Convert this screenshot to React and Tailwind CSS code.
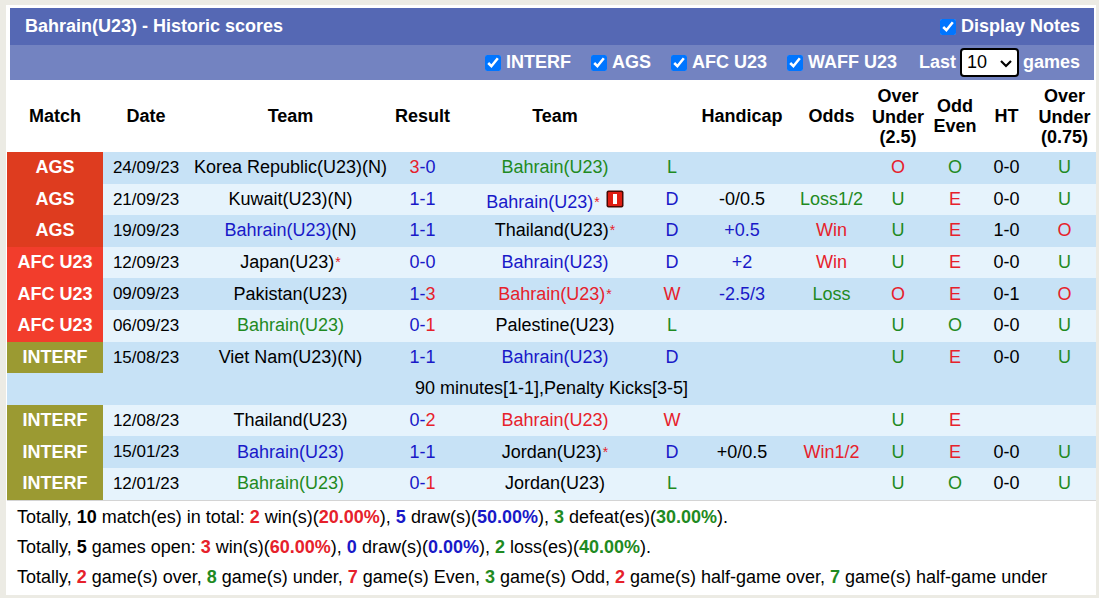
import React from "react";

const C = {
  k: "text-black",
  b: "text-[#1919c8]",
  g: "text-[#1f8a22]",
  r: "text-[#e6212b]",
};

const matchBg = {
  AGS: "bg-[#de3c1f]",
  "AFC U23": "bg-[#f23d2c]",
  INTERF: "bg-[#9b9a32]",
};

const rows = [
  { m: "AGS", date: "24/09/23", home: ["Korea Republic(U23)(N)", "k"], s: ["3", "r", "0", "b"], away: ["Bahrain(U23)", "g"], res: ["L", "g"], hc: ["", "k"], odds: ["", "k"], ou: ["O", "r"], oe: ["O", "g"], ht: "0-0", ou2: ["U", "g"] },
  { m: "AGS", date: "21/09/23", home: ["Kuwait(U23)(N)", "k"], s: ["1", "b", "1", "b"], away: ["Bahrain(U23)", "b"], awayStar: true, card: true, res: ["D", "b"], hc: ["-0/0.5", "k"], odds: ["Loss1/2", "g"], ou: ["U", "g"], oe: ["E", "r"], ht: "0-0", ou2: ["U", "g"] },
  { m: "AGS", date: "19/09/23", home: ["Bahrain(U23)", "b"], homeN: true, s: ["1", "b", "1", "b"], away: ["Thailand(U23)", "k"], awayStar: true, res: ["D", "b"], hc: ["+0.5", "b"], odds: ["Win", "r"], ou: ["U", "g"], oe: ["E", "r"], ht: "1-0", ou2: ["O", "r"] },
  { m: "AFC U23", date: "12/09/23", home: ["Japan(U23)", "k"], homeStar: true, s: ["0", "b", "0", "b"], away: ["Bahrain(U23)", "b"], res: ["D", "b"], hc: ["+2", "b"], odds: ["Win", "r"], ou: ["U", "g"], oe: ["E", "r"], ht: "0-0", ou2: ["U", "g"] },
  { m: "AFC U23", date: "09/09/23", home: ["Pakistan(U23)", "k"], s: ["1", "b", "3", "r"], away: ["Bahrain(U23)", "r"], awayStar: true, res: ["W", "r"], hc: ["-2.5/3", "b"], odds: ["Loss", "g"], ou: ["O", "r"], oe: ["E", "r"], ht: "0-1", ou2: ["O", "r"] },
  { m: "AFC U23", date: "06/09/23", home: ["Bahrain(U23)", "g"], s: ["0", "b", "1", "r"], away: ["Palestine(U23)", "k"], res: ["L", "g"], hc: ["", "k"], odds: ["", "k"], ou: ["U", "g"], oe: ["O", "g"], ht: "0-0", ou2: ["U", "g"] },
  { m: "INTERF", date: "15/08/23", home: ["Viet Nam(U23)(N)", "k"], s: ["1", "b", "1", "b"], away: ["Bahrain(U23)", "b"], res: ["D", "b"], hc: ["", "k"], odds: ["", "k"], ou: ["U", "g"], oe: ["E", "r"], ht: "0-0", ou2: ["U", "g"], note: "90 minutes[1-1],Penalty Kicks[3-5]" },
  { m: "INTERF", date: "12/08/23", home: ["Thailand(U23)", "k"], s: ["0", "b", "2", "r"], away: ["Bahrain(U23)", "r"], res: ["W", "r"], hc: ["", "k"], odds: ["", "k"], ou: ["U", "g"], oe: ["E", "r"], ht: "", ou2: ["", "k"] },
  { m: "INTERF", date: "15/01/23", home: ["Bahrain(U23)", "b"], s: ["1", "b", "1", "b"], away: ["Jordan(U23)", "k"], awayStar: true, res: ["D", "b"], hc: ["+0/0.5", "k"], odds: ["Win1/2", "r"], ou: ["U", "g"], oe: ["E", "r"], ht: "0-0", ou2: ["U", "g"] },
  { m: "INTERF", date: "12/01/23", home: ["Bahrain(U23)", "g"], s: ["0", "b", "1", "r"], away: ["Jordan(U23)", "k"], res: ["L", "g"], hc: ["", "k"], odds: ["", "k"], ou: ["U", "g"], oe: ["O", "g"], ht: "0-0", ou2: ["U", "g"] },
];

const Star = () => (
  <sup className="text-[#e6212b] text-[14px] relative top-[-1px] ml-[1px]">*</sup>
);

const RedCard = () => (
  <svg width="18" height="18" viewBox="0 0 18 18" className="inline-block align-middle ml-[6px] relative top-[-1px]">
    <rect x="0.5" y="0.5" width="17" height="17" rx="2" fill="#4a0a05" />
    <rect x="2" y="2" width="14" height="14" rx="1" fill="#e01d12" />
    <rect x="7" y="4" width="4" height="10" fill="#ffffff" />
  </svg>
);

const Check = ({ label }) => (
  <label className="flex items-center gap-[5px]">
    <input type="checkbox" defaultChecked className="w-4 h-4 accent-[#0075ff] m-0" />
    <span>{label}</span>
  </label>
);

const B = ({ c, children }) => <b className={C[c]}>{children}</b>;

export default function App() {
  return (
    <div
      className="min-h-screen bg-[#ecebe4] pt-[5px] pl-[6px]"
      style={{ fontFamily: '"Liberation Sans", Arial, sans-serif' }}
    >
      <div className="w-[1090px] bg-white pt-[3px] pb-[3px]">
        <div className="ml-[4px] mr-[2px]">
          <div className="h-[37px] bg-[#5568b4] flex items-center justify-between pl-[15px] pr-[14px] text-white font-bold text-[18px]">
            <span>Bahrain(U23) - Historic scores</span>
            <Check label="Display Notes" />
          </div>
          <div className="h-[35px] bg-[#7383c1] flex items-center justify-end pr-[14px] gap-[20px] text-white font-bold text-[18px]">
            <Check label="INTERF" />
            <Check label="AGS" />
            <Check label="AFC U23" />
            <Check label="WAFF U23" />
            <div className="flex items-center gap-[4px] ml-[2px]">
              <span>Last</span>
              <div className="w-[59px] h-[29px] bg-white border-2 border-black rounded-[4px] flex items-center justify-between pl-[5px] pr-[4px] text-black font-normal">
                <span>10</span>
                <svg width="14" height="10" viewBox="0 0 14 10">
                  <path d="M2 3l5 5 5-5" fill="none" stroke="#000" strokeWidth="2.2" />
                </svg>
              </div>
              <span>games</span>
            </div>
          </div>
        </div>

        <table className="ml-[1px] w-[1089px] table-fixed border-collapse text-[18px] text-black">
          <colgroup>
            <col className="w-[96px]" />
            <col className="w-[86px]" />
            <col className="w-[203px]" />
            <col className="w-[61px]" />
            <col className="w-[204px]" />
            <col className="w-[30px]" />
            <col className="w-[110px]" />
            <col className="w-[69px]" />
            <col className="w-[64px]" />
            <col className="w-[50px]" />
            <col className="w-[53px]" />
            <col className="w-[63px]" />
          </colgroup>
          <thead>
            <tr className="h-[72px] font-bold leading-[20.5px] text-center">
              <th>Match</th>
              <th>Date</th>
              <th>Team</th>
              <th>Result</th>
              <th>Team</th>
              <th></th>
              <th>Handicap</th>
              <th>Odds</th>
              <th className="pt-[2px]">Over<br />Under<br />(2.5)</th>
              <th>Odd<br />Even</th>
              <th>HT</th>
              <th className="pt-[2px]">Over<br />Under<br />(0.75)</th>
            </tr>
          </thead>
          <tbody className="text-center">
            {rows.map((r, i) => {
              const bg = i % 2 === 0 ? "bg-[#c7e2f6]" : "bg-[#e6f3fc]";
              return (
                <React.Fragment key={i}>
                  <tr className={`h-[31.6px] ${bg}`}>
                    <td className={`${matchBg[r.m]} text-white font-bold`}>{r.m}</td>
                    <td className="text-[17px]">{r.date}</td>
                    <td>
                      <span className={C[r.home[1]]}>{r.home[0]}</span>
                      {r.homeN && <span>(N)</span>}
                      {r.homeStar && <Star />}
                    </td>
                    <td>
                      <span className={C[r.s[1]]}>{r.s[0]}</span>
                      <span className={C.b}>-</span>
                      <span className={C[r.s[3]]}>{r.s[2]}</span>
                    </td>
                    <td>
                      <span className={r.card ? "relative top-[3px]" : ""}>
                        <span className={C[r.away[1]]}>{r.away[0]}</span>
                        {r.awayStar && <Star />}
                      </span>
                      {r.card && <RedCard />}
                    </td>
                    <td className={C[r.res[1]]}>{r.res[0]}</td>
                    <td className={C[r.hc[1]]}>{r.hc[0]}</td>
                    <td className={C[r.odds[1]]}>{r.odds[0]}</td>
                    <td className={C[r.ou[1]]}>{r.ou[0]}</td>
                    <td className={C[r.oe[1]]}>{r.oe[0]}</td>
                    <td>{r.ht}</td>
                    <td className={C[r.ou2[1]]}>{r.ou2[0]}</td>
                  </tr>
                  {r.note && (
                    <tr className={`h-[31.6px] ${bg}`}>
                      <td colSpan={12}>{r.note}</td>
                    </tr>
                  )}
                </React.Fragment>
              );
            })}
          </tbody>
        </table>

        <div className="border-t border-[#d4d4d4] ml-[1px] pl-[10px] pt-[1px] text-[18px] leading-[30px] text-black">
          <div>
            Totally, <B c="k">10</B> match(es) in total: <B c="r">2</B> win(s)(<B c="r">20.00%</B>), <B c="b">5</B> draw(s)(<B c="b">50.00%</B>), <B c="g">3</B> defeat(es)(<B c="g">30.00%</B>).
          </div>
          <div>
            Totally, <B c="k">5</B> games open: <B c="r">3</B> win(s)(<B c="r">60.00%</B>), <B c="b">0</B> draw(s)(<B c="b">0.00%</B>), <B c="g">2</B> loss(es)(<B c="g">40.00%</B>).
          </div>
          <div>
            Totally, <B c="r">2</B> game(s) over, <B c="g">8</B> game(s) under, <B c="r">7</B> game(s) Even, <B c="g">3</B> game(s) Odd, <B c="r">2</B> game(s) half-game over, <B c="g">7</B> game(s) half-game under
          </div>
        </div>
      </div>
    </div>
  );
}
